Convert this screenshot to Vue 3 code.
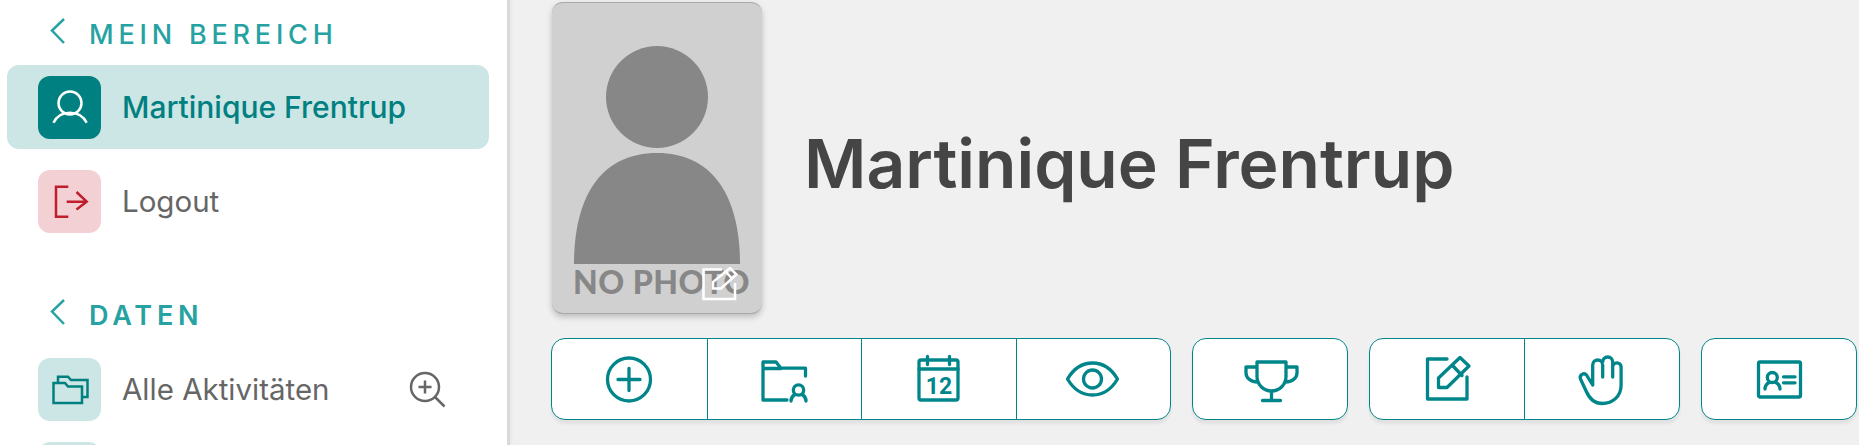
<script setup>
</script>

<template>
  <div class="page">
    <aside class="side">
      <div class="head">
        <svg class="chev" viewBox="0 0 16 26"><path d="M14 1 2 12.500 14 25" /></svg>
        <span>MEIN BEREICH</span>
      </div>
      <div class="list first">
        <a class="item active">
          <span class="tile tile-teal">
            <svg viewBox="0 0 63 63" class="i-white"><circle cx="32" cy="27" r="11.500" /><path d="M15.500 46.700C19 39.500 25 36.700 32 36.700s13 2.800 16.700 10" /></svg>
          </span>
          <span class="label strong">Martinique Frentrup</span>
        </a>
        <a class="item">
          <span class="tile tile-red">
            <svg viewBox="0 0 63 63" class="i-red"><path d="M30.300 16.700H18v30h12.300M28.700 31.700h20M38.500 22l10.200 9.700L38.500 39.500" /></svg>
          </span>
          <span class="label">Logout</span>
        </a>
      </div>
      <div class="head second">
        <svg class="chev" viewBox="0 0 16 26"><path d="M14 1 2 12.500 14 25" /></svg>
        <span>DATEN</span>
      </div>
      <div class="list tight">
        <a class="item">
          <span class="tile tile-pale">
            <svg viewBox="0 0 63 63" class="i-teal"><path d="M15.500 25H27l3 3.500h14V45H15.500ZM20 24v-5.300h10l3 3.300h16.500v17H44" /></svg>
          </span>
          <span class="label">Alle Aktivitäten</span>
          <svg class="zoom" viewBox="0 0 37 37"><circle cx="16" cy="16" r="14" /><path d="M16 9.500v13M9.500 16h13M26 26l9.500 9.500" /></svg>
        </a>
        <a class="item">
          <span class="tile tile-pale"></span>
        </a>
      </div>
    </aside>

    <main class="main">
      <section class="top">
        <div class="photo">
          <svg class="person" viewBox="0 0 210 312">
            <circle cx="105" cy="94" r="51" fill="#878787" />
            <path d="M22 261C22 195 48 150 105 150s83 45 83 111Z" fill="#878787" />
          </svg>
          <span class="nophoto">NO PHOTO</span>
          <svg class="photo-edit" viewBox="0 0 36 34">
            <path d="M20 2.500H1.500V32H33V16" />
            <path d="M11 21.500V15L28 1 34.500 7.500 19 21.500Z" />
            <path d="M24 5l6.500 7" />
          </svg>
        </div>
        <h1 class="title">Martinique Frentrup</h1>
      </section>

      <section class="actions">
        <div class="group">
          <button class="cell">
            <svg class="ico" viewBox="0 0 60 60"><circle cx="30" cy="30.500" r="21.500" /><path d="M30 19.500v22M19 30.500h22" /></svg>
          </button>
          <button class="cell">
            <svg class="ico" viewBox="0 0 60 60"><path d="M33 51H9V13h13l5 6.200H51.500V27M9 19.500h18" /><circle cx="44.500" cy="41" r="5.200" /><path d="M37 52c0-3 1.500-5 3.800-6.500M52 52c0-3-1.500-5-3.800-6.500" /></svg>
          </button>
          <button class="cell">
            <svg class="ico" viewBox="0 0 60 60">
              <rect x="10" y="11" width="39" height="40" rx="2" />
              <path d="M10 20h39M18.500 7.500v8M40.500 7.500v8" />
              <text x="30" y="45" class="cal-num">12</text>
            </svg>
          </button>
          <button class="cell">
            <svg class="ico" viewBox="0 0 60 60"><path d="M4.500 30C11 19 20 14 29.500 14S48 19 54.500 30C48 41 39 46 29.500 46S11 41 4.500 30Z" /><circle cx="29.500" cy="30" r="9" /></svg>
          </button>
        </div>
        <div class="group">
          <button class="cell">
            <svg class="ico" viewBox="0 0 60 60"><path d="M17 13h29v14.500a14.500 14.500 0 0 1-29 0ZM17 18H6v6c0 5 5 9 11.500 9M46 18h11v6c0 5-5 9-11.500 9M31.500 42v9.500M22.500 51.500h18" /></svg>
          </button>
        </div>
        <div class="group">
          <button class="cell">
            <svg class="ico" viewBox="0 0 60 60"><path d="M30 10H10.500v40H50V28" /><path d="M21.500 38.500V29L43 8.500 52 17 30 38.500Z" /><path d="M35.500 16.500 45 26.500" /></svg>
          </button>
          <button class="cell">
            <svg class="ico" viewBox="0 0 60 60"><path d="M20.700 36V16a5 5 0 0 1 10 0v12M30.700 13a5 5 0 0 1 10 0v15M40.700 18a4.200 4.200 0 0 1 8.400 0v18c0 11-8 18.500-19 18.500-8 0-13-5.500-16-12.500L8.500 30c-1.500-4 3.500-7 6-4l6.200 10" /></svg>
          </button>
        </div>
        <div class="group">
          <button class="cell">
            <svg class="ico" viewBox="0 0 60 60"><rect x="9.500" y="13" width="42" height="35" rx="1.500" /><circle cx="23.300" cy="28.500" r="5" /><path d="M16 40c0-3 1.500-5 4-6.500M31 40c0-3-1.500-5-4-6.500M34.500 27.800H46M34.500 33.800H46" /></svg>
          </button>
        </div>
      </section>
    </main>
  </div>
</template>

<style>
html, body { margin: 0; background: #f0f0f0; }
</style>

<style scoped>
.page {
  display: flex;
  width: 1859px;
  height: 445px;
  overflow: hidden;
  background: #f0f0f0;
  font-family: Inter, "Liberation Sans", sans-serif;
}
.side {
  flex: none;
  width: 510px;
  box-sizing: border-box;
  padding: 14px 0 0 7px;
  background: #fff;
  border-right: 3px solid #d9d9d9;
  box-shadow: 2px 0 2px #e9e9e9;
}
.head {
  display: flex;
  align-items: center;
  height: 40px;
  padding-left: 43px;
  color: #26a2a2;
  font-size: 27px;
  font-weight: 500;
  letter-spacing: 4.800px;
}
.head.second { margin-top: 52px; font-weight: 600; }
.chev {
  width: 16px;
  height: 26px;
  margin: -6px 23px 0 0;
  fill: none;
  stroke: #26a2a2;
  stroke-width: 2.500;
}
.list { display: flex; flex-direction: column; width: 482px; margin-top: 11px; gap: 10px; }
.list.tight { margin-top: 12px; gap: 0; }
.item {
  display: flex;
  align-items: center;
  flex: none;
  height: 84px;
  box-sizing: border-box;
  padding-left: 31px;
  border-radius: 12px;
  color: #666;
  font-size: 29.500px;
}
.active { background: #cce5e5; color: #008080; }
.tile {
  flex: none;
  width: 63px;
  height: 63px;
  margin-right: 21px;
  border-radius: 12px;
}
.tile svg { display: block; width: 63px; height: 63px; fill: none; stroke-width: 2.500; }
.tile-teal { background: #008080; }
.tile-red { background: #f3d0d4; }
.tile-pale { background: #cce5e5; }
.i-white { stroke: #fff; }
.i-red { stroke: #bf1f2c; }
.i-teal { stroke: #008080; }
.label.strong { font-size: 30px; font-weight: 500; }
.zoom {
  flex: none;
  width: 37px;
  height: 37px;
  margin-left: 79px;
  fill: none;
  stroke: #666;
  stroke-width: 2.500;
}

.main { flex: none; padding-left: 42px; }
.top { display: flex; align-items: center; gap: 42px; padding-top: 2px; }
.photo {
  position: relative;
  flex: none;
  width: 210px;
  height: 312px;
  box-sizing: border-box;
  background: #d0d0d0;
  border-top: 1px solid #aaa;
  border-bottom: 1px solid #aaa;
  border-radius: 11px;
  box-shadow: 0 3px 6px rgba(0, 0, 0, 0.22);
}
.person { position: absolute; left: 0; top: 0; width: 210px; height: 312px; }
.nophoto {
  position: absolute;
  left: 21px;
  top: 261px;
  color: #878787;
  font-family: Lato, sans-serif;
  font-size: 32px;
  font-weight: 900;
  letter-spacing: 0.500px;
  line-height: 36px;
  white-space: nowrap;
}
.photo-edit {
  position: absolute;
  left: 150px;
  top: 264px;
  width: 36px;
  height: 34px;
  fill: none;
  stroke: #fff;
  stroke-width: 2.500;
}
.title {
  margin: 10px 0 0;
  color: #454545;
  font-size: 67.700px;
  font-weight: 600;
  white-space: nowrap;
}
.actions { display: flex; gap: 20.700px; margin: 24px 0 0 -1px; }
.group {
  display: flex;
  height: 82px;
  box-sizing: border-box;
  background: #fff;
  border: 1px solid #00868a;
  border-radius: 14px;
  box-shadow: 0 4px 3px rgba(0, 0, 0, 0.06);
  overflow: hidden;
}
.cell {
  display: flex;
  align-items: center;
  justify-content: center;
  width: 154.500px;
  padding: 0;
  background: none;
  border: 0;
  border-left: 1px solid #00868a;
}
.cell:first-child { border-left: 0; }
.ico { width: 60px; height: 60px; fill: none; stroke: #00868a; stroke-width: 3.300; stroke-linecap: round; stroke-linejoin: round; }
.cal-num {
  fill: #00868a;
  stroke: none;
  font-family: Roboto, sans-serif;
  font-size: 23px;
  font-weight: 700;
  text-anchor: middle;
}
</style>
